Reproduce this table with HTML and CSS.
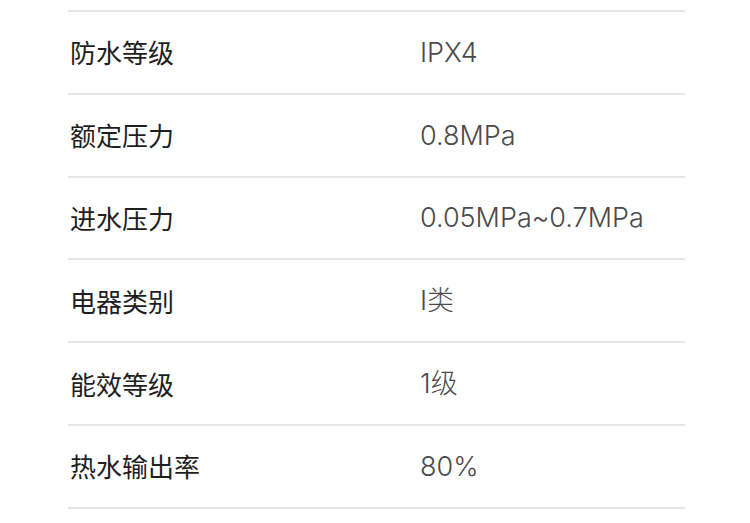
FILE: index.html
```html
<!DOCTYPE html>
<html lang="zh">
<head>
<meta charset="utf-8">
<link rel="stylesheet" href="styles.css">
</head>
<body>
<div class="spec">
  <div class="row"><div class="label">防水等级</div><div class="value">IPX4</div></div>
  <div class="row"><div class="label">额定压力</div><div class="value">0.8MPa</div></div>
  <div class="row"><div class="label">进水压力</div><div class="value">0.05MPa~0.7MPa</div></div>
  <div class="row"><div class="label">电器类别</div><div class="value">I类</div></div>
  <div class="row"><div class="label">能效等级</div><div class="value">1级</div></div>
  <div class="row"><div class="label">热水输出率</div><div class="value">80%</div></div>
</div>
</body>
</html>
```
FILE: styles.css
```css
html, body {
  margin: 0;
  padding: 0;
  background: #ffffff;
}
.spec {
  margin: 10px 0 0 68px;
  width: 617px;
  border-top: 2px solid #e6e6e6;
}
.row {
  display: grid;
  grid-template-columns: 350px 1fr;
  align-items: center;
  height: 80.8px;
  padding-left: 2px;
  border-bottom: 2px solid #e6e6e6;
}
.label {
  font-family: "Noto Sans CJK SC", sans-serif;
  font-size: 26px;
  color: #1e1e1e;
  line-height: 1;
}
.value {
  font-family: "Inter", "Noto Sans CJK SC", sans-serif;
  font-weight: 300;
  font-size: 27px;
  color: #4a4a4a;
  line-height: 1;
}
```
